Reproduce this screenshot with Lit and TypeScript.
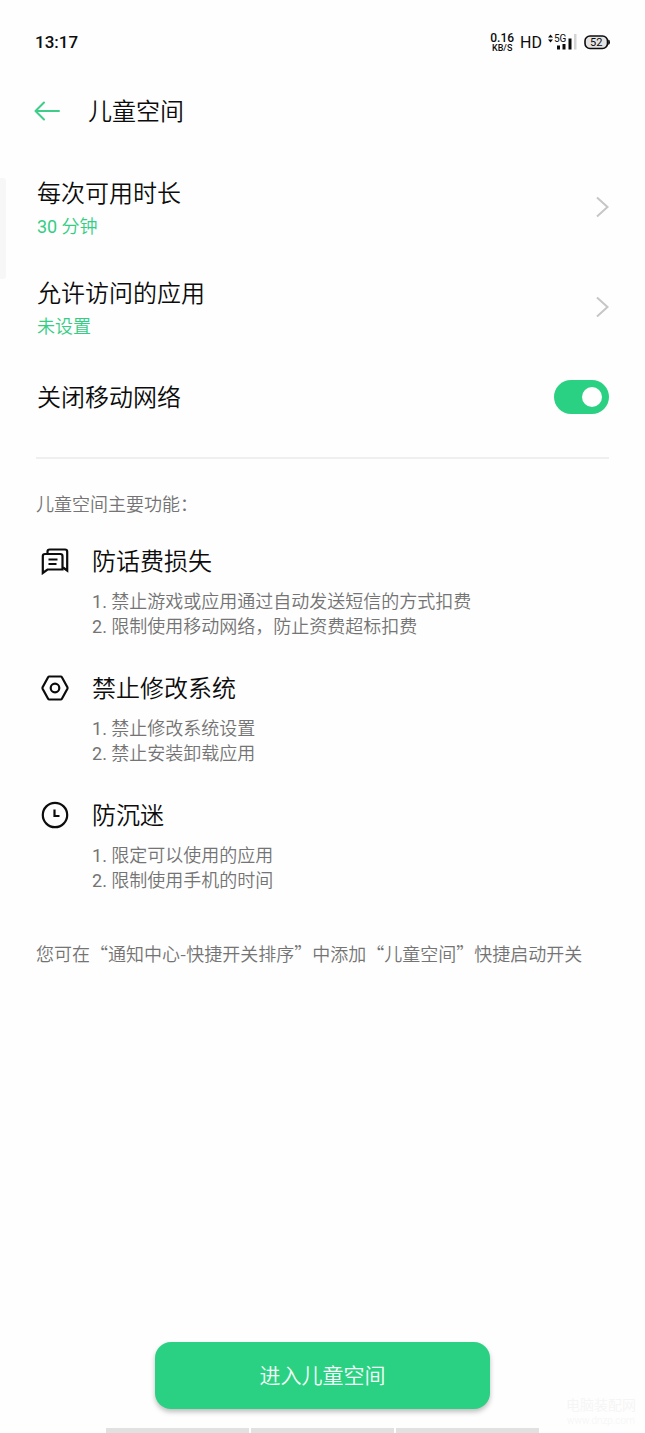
import { LitElement, html, css, svg } from "lit";
import { customElement, state } from "lit/decorators.js";

interface Feature {
  icon: unknown;
  title: string;
  points: string[];
}

const messageIcon = svg`
  <path d="M6.500 6.500V4.700Q6.500 2.500 8.700 2.500H24Q26.200 2.500 26.200 4.700V23.500L22 20.500"></path>
  <path d="M1.800 26V9.200Q1.800 7 4 7H19.300Q21.500 7 21.500 9.200V22.500H6.500Z"></path>
  <path d="M7.500 12.500H16.500M7.500 17H15.500"></path>
`;

const systemIcon = svg`
  <path d="M8.200 2.500H19.800Q20.500 2.500 20.900 3.200L26.400 13.300Q26.700 14 26.400 14.700L20.900 24.800Q20.500 25.500 19.800 25.500H8.200Q7.500 25.500 7.100 24.800L1.600 14.700Q1.300 14 1.600 13.300L7.100 3.200Q7.500 2.500 8.200 2.500Z"></path>
  <circle cx="14" cy="14" r="4.300"></circle>
`;

const clockIcon = svg`
  <circle cx="14" cy="14" r="12.200"></circle>
  <path d="M13.500 8.500V15H18.500"></path>
`;

const features: Feature[] = [
  {
    icon: messageIcon,
    title: "防话费损失",
    points: ["禁止游戏或应用通过自动发送短信的方式扣费", "限制使用移动网络\uFF0C防止资费超标扣费"],
  },
  {
    icon: systemIcon,
    title: "禁止修改系统",
    points: ["禁止修改系统设置", "禁止安装卸载应用"],
  },
  {
    icon: clockIcon,
    title: "防沉迷",
    points: ["限定可以使用的应用", "限制使用手机的时间"],
  },
];

@customElement("app-root")
export class AppRoot extends LitElement {
  static styles = css`
    :host {
      display: flex;
      flex-direction: column;
      position: relative;
      box-sizing: border-box;
      min-height: 100vh;
      background: #fefefe;
      color: #0c0c0c;
      font-family: Roboto, "Noto Sans CJK SC", sans-serif;
      font-size: 18px;
      font-weight: 350;
      line-height: 26px;
    }
    * {
      box-sizing: border-box;
    }
    h1, h2, p, ul {
      margin: 0;
      padding: 0;
      font-weight: inherit;
    }
    .status {
      display: flex;
      align-items: center;
      justify-content: space-between;
      height: 84px;
      padding: 0 35px;
    }
    .time {
      font-size: 17px;
      font-weight: 500;
    }
    .indicators {
      display: flex;
      align-items: center;
      gap: 6px;
    }
    .speed {
      display: flex;
      flex-direction: column;
      align-items: center;
      padding-top: 2px;
      font-size: 12px;
      font-weight: 500;
      line-height: 10px;
    }
    .unit {
      font-size: 9px;
    }
    .hd {
      padding-top: 2px;
      font-size: 16px;
      font-weight: 400;
      line-height: 20px;
    }
    .signal {
      display: block;
      width: 30px;
      height: 18px;
    }
    .battery {
      display: block;
      width: 26px;
      height: 16px;
    }
    .signal, .battery, .number {
      font-weight: 400;
    }
    .header {
      display: flex;
      align-items: center;
      gap: 28px;
      height: 54px;
      padding: 0 34px;
    }
    .back {
      display: block;
      width: 26px;
      height: 22px;
    }
    .back svg {
      display: block;
    }
    .title {
      padding-top: 2px;
      font-size: 24px;
      line-height: 36px;
    }
    .settings {
      display: flex;
      flex-direction: column;
      margin: 0 36px;
      padding: 19px 0 20px;
      border-bottom: 2px solid #efefef;
    }
    .row {
      display: flex;
      align-items: center;
      justify-content: space-between;
      width: 100%;
      height: 100px;
      padding: 0 0 0 1px;
      border: 0;
      background: none;
      color: inherit;
      font: inherit;
      text-align: left;
    }
    .row.short {
      height: 80px;
    }
    .labels {
      display: flex;
      flex-direction: column;
      padding-top: 2px;
    }
    .value {
      color: #34cd84;
      line-height: 30px;
    }
    .chevron {
      display: block;
      width: 14px;
      height: 22px;
    }
    .switch {
      appearance: none;
      display: flex;
      align-items: center;
      width: 55px;
      height: 34px;
      margin: 0;
      padding: 0 7px;
      border-radius: 17px;
      background: #dcdcdc;
    }
    .switch::before {
      content: "";
      width: 20px;
      height: 20px;
      border-radius: 50%;
      background: #fefefe;
    }
    .switch:checked {
      justify-content: flex-end;
      background: #2bd182;
    }
    .about {
      display: flex;
      flex-direction: column;
      padding: 33px 36px 32px;
      color: #747474;
    }
    .features {
      display: flex;
      flex-direction: column;
      gap: 30px;
      padding: 24px 0 47px;
    }
    .feature {
      display: grid;
      grid-template-columns: 28px 1fr;
      column-gap: 23px;
      row-gap: 9px;
      align-items: center;
      padding-left: 5px;
    }
    .feature .title {
      color: #0c0c0c;
    }
    .icon {
      display: block;
      width: 28px;
      height: 28px;
      stroke: #0c0c0c;
    }
    .points {
      grid-column: 2;
      list-style: none;
      line-height: 25px;
    }
    .note {
      font-family: "Noto Sans CJK SC", sans-serif;
    }
    .bottom {
      display: flex;
      flex-direction: column;
      align-items: center;
      gap: 19px;
      margin-top: auto;
    }
    .enter {
      width: 52%;
      height: 67px;
      padding: 0 0 3px;
      border: 0;
      border-radius: 16px;
      background: #2bd182;
      box-shadow: 0 3px 5px rgba(0, 0, 0, 0.25);
      color: #f4fff9;
      font-family: inherit;
      font-size: 21px;
      font-weight: inherit;
    }
    .nav {
      display: grid;
      grid-template-columns: repeat(3, 1fr);
      gap: 2px;
      width: 67%;
      height: 5px;
    }
    .nav span {
      background: #e1e1e1;
    }
    .edge {
      position: absolute;
      top: 178px;
      left: 0;
      width: 6px;
      height: 101px;
      border-radius: 0 3px 3px 0;
      background: #f7f7f7;
    }
    .mark {
      position: absolute;
      right: 9px;
      bottom: 4px;
      color: #f5f5f5;
      font-size: 14px;
      line-height: 16px;
      text-align: center;
    }
    .site {
      display: block;
      font-size: 10px;
    }
  `;

  @state() private networkOff = true;

  private chevron() {
    return html`<svg class="chevron" viewBox="0 0 14 22" fill="none" stroke="#c6c6c6" stroke-width="2" aria-hidden="true">
      <path d="M2 1.500L12.500 11L2 20.500"></path>
    </svg>`;
  }

  private toggle(event: Event) {
    this.networkOff = (event.target as HTMLInputElement).checked;
  }

  render() {
    return html`
      <div class="status">
        <span class="time">13:17</span>
        <div class="indicators">
          <span class="speed"><span>0.16</span><span class="unit">KB/S</span></span>
          <span class="hd">HD</span>
          <svg class="signal" viewBox="0 0 30 18" fill="#0c0c0c">
            <path d="M0 4.500L2.500 1.500L5 4.500ZM0 6.500H5L2.500 9.500Z"></path>
            <text x="6" y="9" font-size="10">5G</text>
            <path d="M9 12.500h3v4H9zM14.500 11h3v5.500h-3zM20.500 5.500h3V16.500h-3z"></path>
            <path d="M26 1h2.500v15.500H26z" fill="#d4d4d4"></path>
          </svg>
          <svg class="battery" viewBox="0 0 26 16">
            <rect x="1" y="2" width="22.500" height="12.500" rx="5" fill="#e4e4e4" stroke="#0c0c0c" stroke-width="1.600"></rect>
            <path d="M24.200 5.500Q26 5.500 26 8.200Q26 11 24.200 11Z" fill="#0c0c0c"></path>
            <text x="12.200" y="12" font-size="11" text-anchor="middle" fill="#0c0c0c">52</text>
          </svg>
        </div>
      </div>

      <header class="header">
        <a class="back" href="#" aria-label="返回">
          <svg width="26" height="22" viewBox="0 0 26 22" fill="none" stroke="#3fce8a" stroke-width="2" stroke-linecap="round" stroke-linejoin="round">
            <path d="M25 11H2M10 2.500L1.500 11L10 19.500"></path>
          </svg>
        </a>
        <h1 class="title">儿童空间</h1>
      </header>

      <section class="settings">
        <button class="row" type="button">
          <span class="labels"><span class="title">每次可用时长</span><span class="value"><span class="number">30</span> 分钟</span></span>
          ${this.chevron()}
        </button>
        <button class="row" type="button">
          <span class="labels"><span class="title">允许访问的应用</span><span class="value">未设置</span></span>
          ${this.chevron()}
        </button>
        <div class="row short">
          <label class="title" for="network">关闭移动网络</label>
          <input class="switch" id="network" type="checkbox" role="switch" .checked=${this.networkOff} @change=${this.toggle} />
        </div>
      </section>

      <section class="about">
        <p>儿童空间主要功能${"\uFF1A"}</p>
        <div class="features">
          ${features.map(
            (feature) => html`
              <div class="feature">
                <svg class="icon" viewBox="0 0 28 28" fill="none" stroke-width="2.200" aria-hidden="true">${feature.icon}</svg>
                <h2 class="title">${feature.title}</h2>
                <ul class="points">
                  ${feature.points.map((point, index) => html`<li><span class="number">${index + 1}.</span> ${point}</li>`)}
                </ul>
              </div>
            `
          )}
        </div>
        <p class="note">您可在“通知中心-快捷开关排序”中添加“儿童空间”快捷启动开关</p>
      </section>

      <div class="bottom">
        <button class="enter" type="button">进入儿童空间</button>
        <div class="nav"><span></span><span></span><span></span></div>
      </div>

      <div class="edge"></div>
      <div class="mark">电脑装配网<span class="site">www.dnzp.com</span></div>
    `;
  }
}
